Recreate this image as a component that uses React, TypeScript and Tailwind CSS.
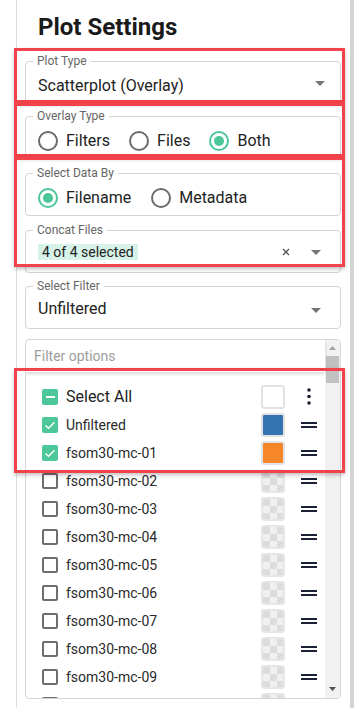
import clsx from 'clsx';

const files = Array.from({ length: 9 }, (_, i) => `fsom30-mc-${String(i + 2).padStart(2, '0')}`);

function DropArrow({ className }: { className?: string }) {
  return (
    <svg width="10" height="5" viewBox="0 0 10 5" className={className}>
      <path d="M0 0 L10 0 L5 5 Z" fill="#757575" />
    </svg>
  );
}

function Field({ label, children, className }: { label: string; children: React.ReactNode; className?: string }) {
  return (
    <fieldset className={clsx('border border-[#d4d4d4] rounded-[4px]', className)}>
      <legend className="ml-[7px] px-1 text-[12px] leading-[14px] text-[#666]">{label}</legend>
      {children}
    </fieldset>
  );
}

function Radio({ label, checked }: { label: string; checked?: boolean }) {
  return (
    <span className="flex items-center">
      <span
        className={clsx(
          'w-5 h-5 rounded-full border-2 flex items-center justify-center',
          checked ? 'border-[#4cc79a]' : 'border-[#6b6b6b]'
        )}
      >
        {checked && <span className="w-[10px] h-[10px] rounded-full bg-[#4cc79a]" />}
      </span>
      <span className="ml-2 text-[16px] text-[#222]">{label}</span>
    </span>
  );
}

function Checkbox({ state }: { state: 'on' | 'off' | 'some' }) {
  if (state === 'off') {
    return <span className="w-4 h-4 rounded-[2px] border-2 border-[#6e6e6e] shrink-0" />;
  }
  return (
    <span className="w-4 h-4 rounded-[2px] bg-[#4cc79a] shrink-0 flex items-center justify-center">
      {state === 'on' ? (
        <svg width="16" height="16" viewBox="0 0 16 16">
          <polyline points="3.5,8.5 6.5,11.3 12.5,5.2" fill="none" stroke="white" strokeWidth="1.4" />
        </svg>
      ) : (
        <span className="w-[9px] h-[2px] bg-white" />
      )}
    </span>
  );
}

function Swatch({ color }: { color?: string }) {
  if (color === 'checker') {
    return (
      <span className="w-6 h-6 rounded-[3px] border-2 border-[#e6e6e6] overflow-hidden shrink-0">
        <svg width="20" height="20" viewBox="0 0 20 20" className="block">
          <rect width="20" height="20" fill="#f0f0f0" />
          <rect x="0" y="0" width="7" height="7" fill="#dcdcdc" />
          <rect x="14" y="0" width="7" height="7" fill="#dcdcdc" />
          <rect x="7" y="7" width="7" height="7" fill="#dcdcdc" />
          <rect x="0" y="14" width="7" height="7" fill="#dcdcdc" />
          <rect x="14" y="14" width="7" height="7" fill="#dcdcdc" />
        </svg>
      </span>
    );
  }
  return (
    <span
      className="w-6 h-6 rounded-[3px] border-2 border-[#e2e2e2] shrink-0"
      style={{ backgroundColor: color ?? '#fff' }}
    />
  );
}

function Handle() {
  return (
    <span className="w-4 flex flex-col gap-[2px] ml-4">
      <span className="h-[2px] bg-[#1c2235]" />
      <span className="h-[2px] bg-[#1c2235]" />
    </span>
  );
}

function Row({ label, state, color }: { label: string; state: 'on' | 'off'; color: string }) {
  return (
    <div className="h-[28px] flex items-center pl-4 pr-2">
      <Checkbox state={state} />
      <span className="ml-2 text-[14px] text-[#2a2a2a]">{label}</span>
      <span className="ml-auto flex items-center">
        <Swatch color={color} />
        <Handle />
      </span>
    </div>
  );
}

export default function App() {
  return (
    <div className="relative w-[354px] h-[708px] overflow-hidden bg-white font-['Roboto',sans-serif] flex">
      <div className="w-4 shrink-0" />
      <div className="flex-1 border-l border-[#dedede] pl-2 pr-[9px] pt-[13px]">
        <h2 className="pl-[13px] text-[24px] leading-[28px] font-bold text-[#1a1a1a]">Plot Settings</h2>

        <Field label="Plot Type" className="mt-[13px]">
          <div className="h-[35px] flex items-center pl-3 pr-[15px]">
            <span className="text-[16px] text-[#222]">Scatterplot (Overlay)</span>
            <DropArrow className="ml-auto -mt-[4px]" />
          </div>
        </Field>

        <Field label="Overlay Type" className="mt-[5px]">
          <div className="h-[35px] flex items-center gap-[19px] pl-3">
            <Radio label="Filters" />
            <Radio label="Files" />
            <Radio label="Both" checked />
          </div>
        </Field>

        <Field label="Select Data By" className="mt-[7px]">
          <div className="h-[35px] flex items-center gap-[20px] pl-3">
            <Radio label="Filename" checked />
            <Radio label="Metadata" />
          </div>
        </Field>

        <Field label="Concat Files" className="mt-[7px]">
          <div className="h-[35px] flex items-start pt-[7px] pl-3 pr-[19px]">
            <span className="h-4 leading-4 px-[4px] bg-[#d7f2e9] text-[14px] text-[#222]">4 of 4 selected</span>
            <svg width="8" height="8" viewBox="0 0 8 8" className="ml-auto mt-1">
              <path d="M1 1 L7 7 M7 1 L1 7" stroke="#555" strokeWidth="1.4" />
            </svg>
            <DropArrow className="ml-[21px] mt-[6px]" />
          </div>
        </Field>

        <Field label="Select Filter" className="mt-[6px]">
          <div className="h-[35px] flex items-center pl-3 pr-[19px]">
            <span className="text-[16px] text-[#222] -mt-[3px]">Unfiltered</span>
            <DropArrow className="ml-auto" />
          </div>
        </Field>

        <div className="mt-[10px] h-[360px] border border-[#d6d6d6] rounded-[4px] flex overflow-hidden">
          <div className="flex-1 min-w-0">
            <div className="relative h-[32px] pl-2 flex items-center text-[14px] text-[#9e9e9e] shadow-[0_2px_3px_rgba(0,0,0,0.15)]">
              Filter options
            </div>
            <div className="pt-[10px]">
              <div className="h-[29px] flex items-center pl-4 pr-2">
                <Checkbox state="some" />
                <span className="ml-2 text-[16px] text-[#222]">Select All</span>
                <span className="ml-auto flex items-center">
                  <Swatch />
                  <span className="w-4 ml-4 flex justify-center">
                    <svg width="4" height="17" viewBox="0 0 4 17">
                      <circle cx="2" cy="2" r="1.8" fill="#1c2235" />
                      <circle cx="2" cy="8.5" r="1.8" fill="#1c2235" />
                      <circle cx="2" cy="15" r="1.8" fill="#1c2235" />
                    </svg>
                  </span>
                </span>
              </div>
              <Row label="Unfiltered" state="on" color="#3574b3" />
              <Row label="fsom30-mc-01" state="on" color="#f5872a" />
              {files.map(f => (
                <Row key={f} label={f} state="off" color="checker" />
              ))}
            </div>
          </div>
          <div className="w-[15px] bg-[#f1f1f1] flex flex-col items-center">
            <svg width="7" height="4" viewBox="0 0 7 4" className="mt-[6px]">
              <path d="M0 4 L7 4 L3.5 0 Z" fill="#a3a3a3" />
            </svg>
            <div className="mt-[6px] w-[13px] h-[27px] bg-[#c1c1c1]" />
            <svg width="7" height="4" viewBox="0 0 7 4" className="mt-auto mb-[7px]">
              <path d="M0 0 L7 0 L3.5 4 Z" fill="#505050" />
            </svg>
          </div>
        </div>

        <Field label="Y-Axis" className="mt-[10px]">
          <div className="h-[35px]" />
        </Field>
      </div>
      <div className="w-[4px] shrink-0 bg-[#d4d4d4]" />

      {/* annotation boxes */}
      <div className="absolute left-[14px] top-[48px] w-[331px] h-[55px] border-[3px] border-[#f2424a] shadow-[0_2px_4px_rgba(0,0,0,0.25)]" />
      <div className="absolute left-[14px] top-[103px] w-[331px] h-[54px] border-[3px] border-[#f2424a] shadow-[0_2px_4px_rgba(0,0,0,0.25)]" />
      <div className="absolute left-[14px] top-[157px] w-[331px] h-[110px] border-[3px] border-[#f2424a] shadow-[0_2px_4px_rgba(0,0,0,0.25)]" />
      <div className="absolute left-[14px] top-[368px] w-[331px] h-[105px] border-[3px] border-[#f2424a] shadow-[0_2px_4px_rgba(0,0,0,0.25)]" />
    </div>
  );
}
